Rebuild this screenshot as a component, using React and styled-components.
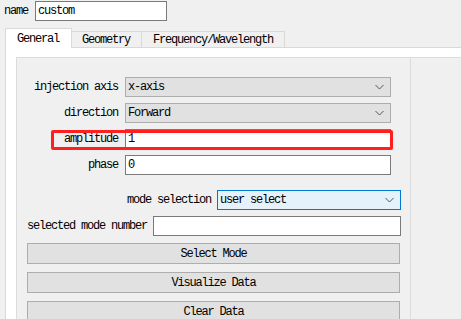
import React from 'react';
import styled, { createGlobalStyle } from 'styled-components';

const GlobalStyle = createGlobalStyle`
  html, body {
    margin: 0;
    padding: 0;
    background: #f0f0f0;
    overflow: hidden;
  }
  body {
    font-family: "Liberation Mono", "DejaVu Sans Mono", monospace;
    font-size: 12px;
    letter-spacing: -1.2px;
    color: #000;
  }
`;

const Page = styled.div`
  width: 461px;
  height: 319px;
  display: flex;
  flex-direction: column;
`;

const NameRow = styled.div`
  display: flex;
  align-items: center;
  gap: 7px;
  padding: 1px 0 0 4px;
`;

const TextField = styled.div`
  box-sizing: border-box;
  height: 20px;
  width: ${p => (p.$width ? `${p.$width}px` : 'auto')};
  flex: ${p => (p.$grow ? 1 : 'none')};
  background: #fff;
  border: 1px solid #7a7a7a;
  padding-left: 2px;
  display: flex;
  align-items: center;
  white-space: pre;
`;

const TabBar = styled.div`
  display: flex;
  align-items: flex-start;
  margin: 7px 0 0 5px;
  height: 20px;
`;

const Tab = styled.div`
  box-sizing: border-box;
  padding: 0 11px;
  display: flex;
  align-items: center;
  border: 1px solid #d9d9d9;
  border-bottom: none;
  ${p =>
    p.$active
      ? `
    height: 20px;
    background: #fff;
    position: relative;
    z-index: 1;
    padding: 0 12px 0 11px;
    margin-right: -1px;
  `
      : `
    height: 16px;
    margin-top: 3px;
    background: #f0f0f0;
    margin-left: -1px;
  `}
`;

const Pane = styled.div`
  flex: 1;
  margin: -1px 0 0 5px;
  background: #fff;
  border-top: 1px solid #d9d9d9;
  border-left: 1px solid #d9d9d9;
  padding: 9px 0 0 10px;
  display: flex;
`;

const ScrollArea = styled.div`
  flex: 1;
  background: #f0f0f0;
  border-top: 1px solid #dcdcdc;
  border-left: 1px solid #dcdcdc;
  display: flex;
`;

const Content = styled.div`
  width: 393px;
  border-right: 1px solid #dcdcdc;
  padding-top: 19px;
  display: flex;
  flex-direction: column;
`;

const FormGrid = styled.div`
  display: grid;
  grid-template-columns: 101px 266px;
  column-gap: 7px;
  row-gap: 6px;
`;

const Label = styled.div`
  height: 20px;
  display: flex;
  align-items: center;
  justify-content: ${p => (p.$left ? 'flex-start' : 'flex-end')};
  white-space: pre;
`;

const FieldCell = styled.div`
  position: relative;
`;

const Highlight = styled.div`
  position: absolute;
  top: 1px;
  left: -74px;
  width: 342px;
  height: 20px;
  box-sizing: border-box;
  border: 3px solid #ff1f1f;
  border-radius: 2px;
  pointer-events: none;
`;

const Select = styled.div`
  box-sizing: border-box;
  height: 20px;
  width: ${p => (p.$width ? `${p.$width}px` : 'auto')};
  background: ${p => (p.$focus ? '#e5f1fb' : '#e1e1e1')};
  border: 1px solid ${p => (p.$focus ? '#0078d7' : '#adadad')};
  padding: 0 6px 0 2px;
  display: flex;
  align-items: center;
  justify-content: space-between;
  white-space: pre;
`;

const Chevron = () => (
  <svg width="9" height="6" viewBox="0 0 9 6">
    <path d="M0.5 1 L4.5 5 L8.5 1" fill="none" stroke="#555" strokeWidth="1" />
  </svg>
);

const Lower = styled.div`
  margin-top: 15px;
  padding: 0 9px 0 10px;
  display: flex;
  flex-direction: column;
`;

const LineRow = styled.div`
  display: flex;
  align-items: center;
  justify-content: ${p => (p.$end ? 'flex-end' : 'flex-start')};
  gap: 6px;
  margin-bottom: 6px;
`;

const ButtonStack = styled.div`
  display: flex;
  flex-direction: column;
  gap: 8px;
  margin-top: 1px;
  width: 373px;
`;

const Button = styled.div`
  box-sizing: border-box;
  height: 21px;
  background: #e1e1e1;
  border: 1px solid #adadad;
  display: flex;
  align-items: center;
  justify-content: center;
  white-space: pre;
`;

export default function App() {
  return (
    <Page>
      <GlobalStyle />
      <NameRow>
        <span>name</span>
        <TextField $width={132}>custom</TextField>
      </NameRow>
      <TabBar>
        <Tab $active>General</Tab>
        <Tab>Geometry</Tab>
        <Tab>Frequency/Wavelength</Tab>
      </TabBar>
      <Pane>
        <ScrollArea>
          <Content>
            <FormGrid>
              <Label>injection axis</Label>
              <Select>
                <span>x-axis</span>
                <Chevron />
              </Select>
              <Label>direction</Label>
              <Select>
                <span>Forward</span>
                <Chevron />
              </Select>
              <Label>amplitude</Label>
              <FieldCell>
                <TextField>1</TextField>
                <Highlight />
              </FieldCell>
              <Label>phase</Label>
              <TextField>0</TextField>
            </FormGrid>
            <Lower>
              <LineRow $end>
                <Label>mode selection</Label>
                <Select $focus $width={184}>
                  <span>user select</span>
                  <Chevron />
                </Select>
              </LineRow>
              <LineRow>
                <Label $left>selected mode number</Label>
                <TextField $grow />
              </LineRow>
              <ButtonStack>
                <Button>Select Mode</Button>
                <Button>Visualize Data</Button>
                <Button>Clear Data</Button>
              </ButtonStack>
            </Lower>
          </Content>
        </ScrollArea>
      </Pane>
    </Page>
  );
}
